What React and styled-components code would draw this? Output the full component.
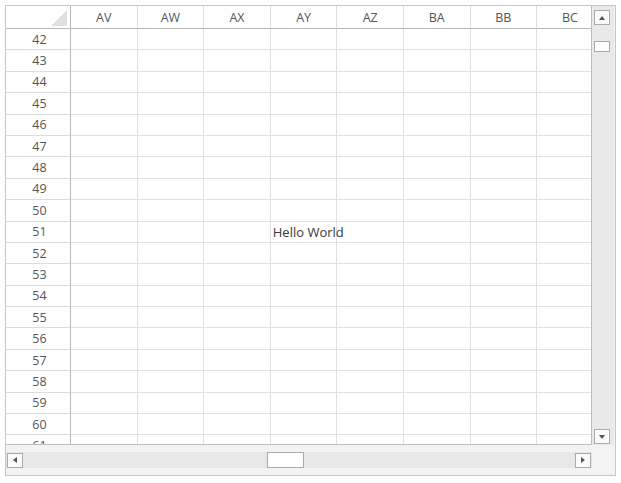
import React from 'react'
import styled, { createGlobalStyle } from 'styled-components'

const columns = ['AV', 'AW', 'AX', 'AY', 'AZ', 'BA', 'BB', 'BC']
const rows = Array.from({ length: 20 }, (_, i) => 42 + i)

const cellText = { '51-AY': 'Hello World' }

const Global = createGlobalStyle`
  body {
    margin: 0;
    background: #fff;
    font-family: "Open Sans", "Liberation Sans", sans-serif;
  }
`

const Frame = styled.div`
  box-sizing: border-box;
  margin: 5px 0 0 5px;
  width: 611px;
  height: 471px;
  border: 1px solid #c6c6c6;
  display: grid;
  grid-template-columns: 586px 23px;
  grid-template-rows: 439px 30px;
  background: #f3f3f3;
`

const Sheet = styled.div`
  box-sizing: border-box;
  overflow: hidden;
  background: #fff;
  border-right: 1px solid #bdbdbd;
  border-bottom: 1px solid #bdbdbd;
  display: grid;
  grid-template-columns: 65px repeat(8, 66.6px);
  grid-template-rows: 23px repeat(20, 21.4px);
`

const Cell = styled.div`
  box-sizing: border-box;
  border-right: 1px solid #e0e0e0;
  border-bottom: 1px solid #e0e0e0;
  font-size: 13px;
  color: #3a3a3a;
  line-height: 20px;
  padding-left: 2px;
  white-space: nowrap;
  overflow: visible;
  position: relative;
  z-index: ${p => (p.$text ? 1 : 0)};
`

const ColHead = styled.div`
  box-sizing: border-box;
  border-right: 1px solid #dcdcdc;
  border-bottom: 1px solid #b8b8b8;
  font-size: 12.5px;
  color: #555;
  display: flex;
  align-items: center;
  justify-content: center;
`

const RowHead = styled.div`
  box-sizing: border-box;
  border-right: 1px solid #b8b8b8;
  border-bottom: 1px solid #dcdcdc;
  font-size: 12.5px;
  color: #555;
  display: flex;
  align-items: center;
  justify-content: center;
  padding-left: 3px;
`

const Corner = styled(ColHead)`
  border-right: 1px solid #b8b8b8;
  position: relative;
  &::after {
    content: '';
    position: absolute;
    right: 3px;
    bottom: 2px;
    width: 0;
    height: 0;
    border-left: 16px solid transparent;
    border-bottom: 16px solid #e0e0e0;
  }
`

const VScroll = styled.div`
  background: #e9e9e9;
  display: flex;
  flex-direction: column;
  align-items: flex-start;
  padding: 4px 0 1px 2px;
  border-right: 1px solid #f3f3f3;
`

const HScroll = styled.div`
  padding: 7px 0 6px 0;
`

const HTrack = styled.div`
  height: 16px;
  background: #e7e7e7;
  display: flex;
  align-items: center;
  padding: 0 1px;
`

const Btn = styled.div`
  box-sizing: border-box;
  width: 16px;
  height: 15px;
  background: #fbfbfb;
  border: 1px solid #ababab;
  display: flex;
  align-items: center;
  justify-content: center;
  flex: none;
`

const Arrow = styled.span`
  width: 0;
  height: 0;
  ${p => p.$dir === 'up' && 'border-left: 3.5px solid transparent; border-right: 3.5px solid transparent; border-bottom: 4px solid #555;'}
  ${p => p.$dir === 'down' && 'border-left: 3.5px solid transparent; border-right: 3.5px solid transparent; border-top: 4px solid #555;'}
  ${p => p.$dir === 'left' && 'border-top: 3.5px solid transparent; border-bottom: 3.5px solid transparent; border-right: 4px solid #555;'}
  ${p => p.$dir === 'right' && 'border-top: 3.5px solid transparent; border-bottom: 3.5px solid transparent; border-left: 4px solid #555;'}
`

const Thumb = styled.div`
  box-sizing: border-box;
  background: #fff;
  border: 1px solid #a9a9a9;
  flex: none;
  width: ${p => p.$w}px;
  height: ${p => p.$h}px;
  margin: ${p => p.$m};
`

const Spacer = styled.div`
  flex: 1;
`

const App = () => (
  <>
    <Global />
    <Frame>
      <Sheet>
        <Corner />
        {columns.map(c => (
          <ColHead key={c}>{c}</ColHead>
        ))}
        {rows.map(r => (
          <React.Fragment key={r}>
            <RowHead>{r}</RowHead>
            {columns.map(c => {
              const t = cellText[`${r}-${c}`]
              return (
                <Cell key={c} $text={!!t}>
                  {t}
                </Cell>
              )
            })}
          </React.Fragment>
        ))}
      </Sheet>
      <VScroll>
        <Btn>
          <Arrow $dir="up" />
        </Btn>
        <Thumb $w={16} $h={11} $m="16px 0 0 0" />
        <Spacer />
        <Btn>
          <Arrow $dir="down" />
        </Btn>
      </VScroll>
      <HScroll>
        <HTrack>
          <Btn>
            <Arrow $dir="left" />
          </Btn>
          <Thumb $w={37} $h={16} $m="0 0 0 244px" />
          <Spacer />
          <Btn>
            <Arrow $dir="right" />
          </Btn>
        </HTrack>
      </HScroll>
      <div />
    </Frame>
  </>
)

export default App
